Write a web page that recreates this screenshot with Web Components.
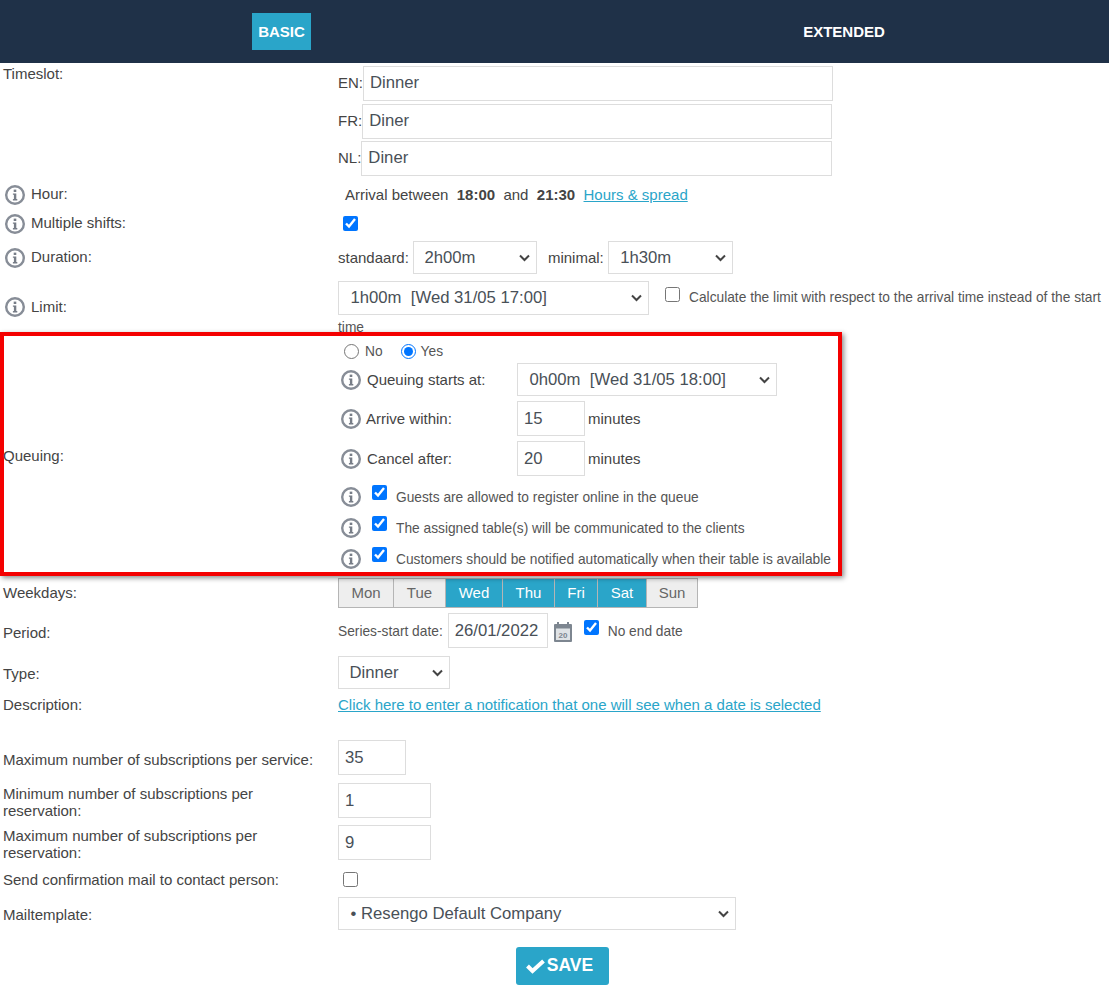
<!DOCTYPE html>
<html>
<head>
<meta charset="utf-8">
<style>
  html, body { margin: 0; background: #fff; }
  body { font: 15px "Liberation Sans", Arial, sans-serif; color: #444; width: 1109px; height: 1000px; overflow: hidden; }
</style>
</head>
<body>
<script>
const define = (name, css, html) => {
  customElements.define(name, class extends HTMLElement {
    constructor() {
      super();
      this.attachShadow({ mode: 'open' });
      this.shadowRoot.innerHTML = `<style>${css}</style>${html}`;
    }
  });
};

define('tab-bar', `
  :host { display: flex; height: 63px; background: #1f3148; font-weight: bold; font-size: 15px; color: #fff; }
  .left { width: 563px; display: flex; justify-content: center; align-items: center; }
  .right { flex: 1; display: flex; justify-content: center; align-items: center; padding-left: 16px; }
  .active { background: #2aa5c9; width: 59px; height: 37px; display: flex; align-items: center; justify-content: center; }
`, `<div class="left"><div class="active">BASIC</div></div><div class="right">EXTENDED</div>`);

define('info-icon', `
  :host { display: block; width: 22px; height: 22px; flex: none; }
  svg { display: block; }
`, `<svg width="22" height="22" viewBox="0 0 22 22">
  <circle cx="11" cy="11" r="8.8" fill="#fff" stroke="#878d97" stroke-width="2.4"/>
  <path d="M8.9 9.4h3.4v5.6h1v1.4H8.9V15h1v-4.2h-1z" fill="#777d87"/>
  <rect x="9.7" y="5.6" width="2.6" height="2.4" fill="#777d87"/>
</svg>`);

define('text-box', `
  :host { display: flex; align-items: center; box-sizing: border-box; border: 1px solid #ddd; background: #fff;
    font-size: 16.7px; color: #495057; padding: 0 6px; height: 35px; flex: none; }
`, `<slot></slot>`);

define('select-box', `
  :host { display: flex; align-items: center; justify-content: space-between; box-sizing: border-box; border: 1px solid #ddd; background: #fff;
    font-size: 16.7px; color: #495057; padding: 0 6px 0 11.5px; height: 33.5px; flex: none; white-space: pre; }
  svg { flex: none; }
`, `<slot></slot><svg width="11" height="8" viewBox="0 0 11 8"><path d="M1 1.5 5.5 6 10 1.5" fill="none" stroke="#444" stroke-width="2"/></svg>`);

define('form-row', `
  :host { display: flex; box-sizing: border-box; }
  .label { width: 338px; flex: none; display: flex; align-items: var(--label-align, center); gap: 4px; padding: var(--label-top, 0) 0 2px 3px; box-sizing: border-box; line-height: 17px; }
  .body { flex: 1; min-width: 0; display: flex; align-items: center; }
  ::slotted(info-icon) { margin: 2px 1px 0; }
`, `<div class="label"><slot name="label"></slot></div><div class="body"><slot></slot></div>`);

define('lang-input', `
  :host { display: flex; align-items: center; height: 37px; }
  .code { flex: none; margin-top: -2px; }
`, `<span class="code"><slot name="code"></slot></span><slot></slot>`);

define('check-line', `
  :host { display: flex; align-items: center; font-size: 13.75px; color: #555; flex: none; }
`, `<slot></slot>`);

define('day-picker', `
  :host { display: flex; height: 30px; box-sizing: border-box; border: 1px solid #b5b5b5; width: 360px; font-size: 15px; }
  ::slotted(span) { display: flex; align-items: center; justify-content: center; box-sizing: border-box; background: #eee; color: #666; border-left: 1px solid #b5b5b5; padding-bottom: 1px; }
  ::slotted(span:first-child) { border-left: 0; }
  ::slotted(.on) { background: #2aa5c9; color: #fff; }
`, `<slot></slot>`);

define('queue-panel', `
  :host { display: flex; box-sizing: border-box; width: 842px; height: 243.5px; margin-top: 1px; border: 4px solid #f40000; box-shadow: 2px 2px 5px rgba(0,0,0,.45); background: #fff; position: relative; }
  .label { width: 335px; flex: none; align-self: center; padding-top: 3px; margin-left: -1px; }
  .body { flex: 1; display: flex; flex-direction: column; }
  ::slotted(.line) { flex: none; display: flex; align-items: center; padding-left: 2px; }
`, `<div class="label"><slot name="label"></slot></div><div class="body"><slot></slot></div>`);

define('save-button', `
  :host { display: flex; align-items: center; justify-content: center; gap: 1px; width: 93px; height: 38px; padding: 0 6px 1px 0; box-sizing: border-box; background: #2aa5c9; border-radius: 3px; color: #fff; font-weight: bold; font-size: 17.5px; }
  svg { flex: none; }
`, `<svg width="20" height="16" viewBox="0 0 20 16"><path d="M1.5 8 6.5 13 17.5 3" fill="none" stroke="#fff" stroke-width="4"/></svg><slot></slot>`);

define('calendar-icon', `
  :host { display: block; width: 18px; height: 20px; flex: none; }
  svg { display: block; }
`, `<svg width="18" height="20" viewBox="0 0 18 20">
  <rect x="0" y="2" width="18" height="18" rx="1" fill="#7d8690"/>
  <rect x="2" y="6.5" width="14" height="11.5" fill="#dfe3e6"/>
  <rect x="3" y="0" width="2" height="4" fill="#7d8690"/><rect x="13" y="0" width="2" height="4" fill="#7d8690"/>
  <text x="9" y="16" text-anchor="middle" font-family="Liberation Sans" font-weight="bold" font-size="8" fill="#7d8690">20</text>
</svg>`);
</script>

<tab-bar></tab-bar>

<form-row style="height:114px; --label-align:flex-start; --label-top:2px">
  <span slot="label">Timeslot:</span>
  <div style="display:flex;flex-direction:column">
    <lang-input style="height:39px"><span slot="code">EN:</span><text-box style="width:470px">Dinner</text-box></lang-input>
    <lang-input><span slot="code">FR:</span><text-box style="width:470px">Diner</text-box></lang-input>
    <lang-input><span slot="code">NL:</span><text-box style="width:471px">Diner</text-box></lang-input>
  </div>
</form-row>
<form-row style="height:33px; margin-top:1px">
  <info-icon slot="label"></info-icon><span slot="label">Hour:</span>
  <div style="padding-left:7px;white-space:pre">Arrival between  <b>18:00</b>  and  <b>21:30</b>  <a style="color:#2aa5c9;text-decoration:underline">Hours &amp; spread</a></div>
</form-row>
<form-row style="height:26px">
  <info-icon slot="label"></info-icon><span slot="label" style="margin-top:-2px">Multiple shifts:</span>
  <input type="checkbox" checked style="width:15px;height:15px;margin:-2px 0 0 5px">
</form-row>
<form-row style="height:39px;padding-top:2px">
  <info-icon slot="label"></info-icon><span slot="label">Duration:</span>
  <span>standaard:</span>
  <select-box style="width:124px;margin-left:4px;padding-left:10.5px">2h00m</select-box>
  <span style="margin-left:11px">minimal:</span>
  <select-box style="width:125px;margin-left:4px">1h30m</select-box>
</form-row>
<form-row style="height:55px;--label-top:7px">
  <info-icon slot="label"></info-icon><span slot="label">Limit:</span>
  <div style="font-size:13.75px;color:#555;align-self:flex-start;padding-top:5px;line-height:20px">
    <div style="display:flex;align-items:center">
      <select-box style="width:311px">1h00m  [Wed 31/05 17:00]</select-box>
      <input type="checkbox" style="width:15px;height:15px;margin:-7px 0 0 16px">
      <span style="margin-left:9px;white-space:nowrap">Calculate the limit with respect to the arrival time instead of the start</span>
    </div>
    <div style="margin-top:3px">time</div>
  </div>
</form-row>

<queue-panel>
  <span slot="label">Queuing:</span>
  <div class="line" style="height:26px;font-size:13.75px;padding-left:6px;color:#555;margin-top:2px">
    <input type="radio" name="q" style="width:15px;height:15px;margin:0 6px 0 0"><span>No</span>
    <input type="radio" name="q" checked style="width:15px;height:15px;margin:0 5px 0 18px"><span>Yes</span>
  </div>
  <div class="line" style="height:33px;margin-top:-1px">
    <info-icon></info-icon><span style="width:150px;margin-left:5px">Queuing starts at:</span>
    <select-box style="width:260px">0h00m  [Wed 31/05 18:00]</select-box>
  </div>
  <div class="line" style="height:40px;margin-top:2.5px">
    <info-icon></info-icon><span style="width:151px;margin-left:4px">Arrive within:</span>
    <text-box style="width:68px">15</text-box><span style="margin-left:3px">minutes</span>
  </div>
  <div class="line" style="height:40px">
    <info-icon></info-icon><span style="width:150px;margin-left:5px">Cancel after:</span>
    <text-box style="width:68px">20</text-box><span style="margin-left:3px">minutes</span>
  </div>
  <check-line class="line" style="height:31px;margin-top:3px"><info-icon></info-icon><input type="checkbox" checked style="width:15px;height:15px;margin:-9px 9px 0 10px"><span>Guests are allowed to register online in the queue</span></check-line>
  <check-line class="line" style="height:31px"><info-icon></info-icon><input type="checkbox" checked style="width:15px;height:15px;margin:-9px 9px 0 10px"><span>The assigned table(s) will be communicated to the clients</span></check-line>
  <check-line class="line" style="height:31px"><info-icon></info-icon><input type="checkbox" checked style="width:15px;height:15px;margin:-9px 9px 0 10px"><span style="white-space:nowrap">Customers should be notified automatically when their table is available</span></check-line>
</queue-panel>

<form-row style="height:35px;">
  <span slot="label">Weekdays:</span>
  <day-picker>
    <span style="width:54px">Mon</span><span style="width:52px">Tue</span><span class="on" style="width:57px">Wed</span><span class="on" style="width:52px">Thu</span><span class="on" style="width:43px">Fri</span><span class="on" style="width:49px">Sat</span><span style="width:51px">Sun</span>
  </day-picker>
</form-row>
<form-row style="height:40px;">
  <span slot="label" style="padding-top:6px">Period:</span>
  <span style="font-size:13.75px;color:#555;padding-top:2px">Series-start date:</span>
  <text-box style="width:100px;margin-left:5px">26/01/2022</text-box>
  <calendar-icon style="margin-left:6px;margin-top:3px"></calendar-icon>
  <input type="checkbox" checked style="width:15px;height:15px;margin:-6px 0 0 12px">
  <span style="font-size:13.75px;color:#555;margin-left:9px;padding-top:2px">No end date</span>
</form-row>
<form-row style="height:44px">
  <span slot="label" style="padding-top:3px">Type:</span>
  <select-box style="width:112px;padding-left:10.5px">Dinner</select-box>
</form-row>
<form-row style="height:22px">
  <span slot="label">Description:</span>
  <a style="color:#2aa5c9;text-decoration:underline;padding-bottom:2px">Click here to enter a notification that one will see when a date is selected</a>
</form-row>
<form-row style="height:36px;margin-top:23px">
  <span slot="label" style="padding-top:5px">Maximum number of subscriptions per service:</span>
  <text-box style="width:68px">35</text-box>
</form-row>
<form-row style="height:35px;margin-top:7.5px">
  <span slot="label" style="padding:4px 40px 0 0">Minimum number of subscriptions per reservation:</span>
  <text-box style="width:93px">1</text-box>
</form-row>
<form-row style="height:35px;margin-top:7px">
  <span slot="label" style="padding:4px 40px 0 0">Maximum number of subscriptions per reservation:</span>
  <text-box style="width:93px">9</text-box>
</form-row>
<form-row style="height:30px;margin-top:5px">
  <span slot="label">Send confirmation mail to contact person:</span>
  <input type="checkbox" style="width:15px;height:15px;margin:-2px 0 0 5px">
</form-row>
<form-row style="height:33px;margin-top:2px">
  <span slot="label" style="padding-top:4px">Mailtemplate:</span>
  <select-box style="width:398px">• Resengo Default Company</select-box>
</form-row>
<div style="display:flex;justify-content:center;padding:17px 0 0 16px">
  <save-button>SAVE</save-button>
</div>
</body>
</html>
